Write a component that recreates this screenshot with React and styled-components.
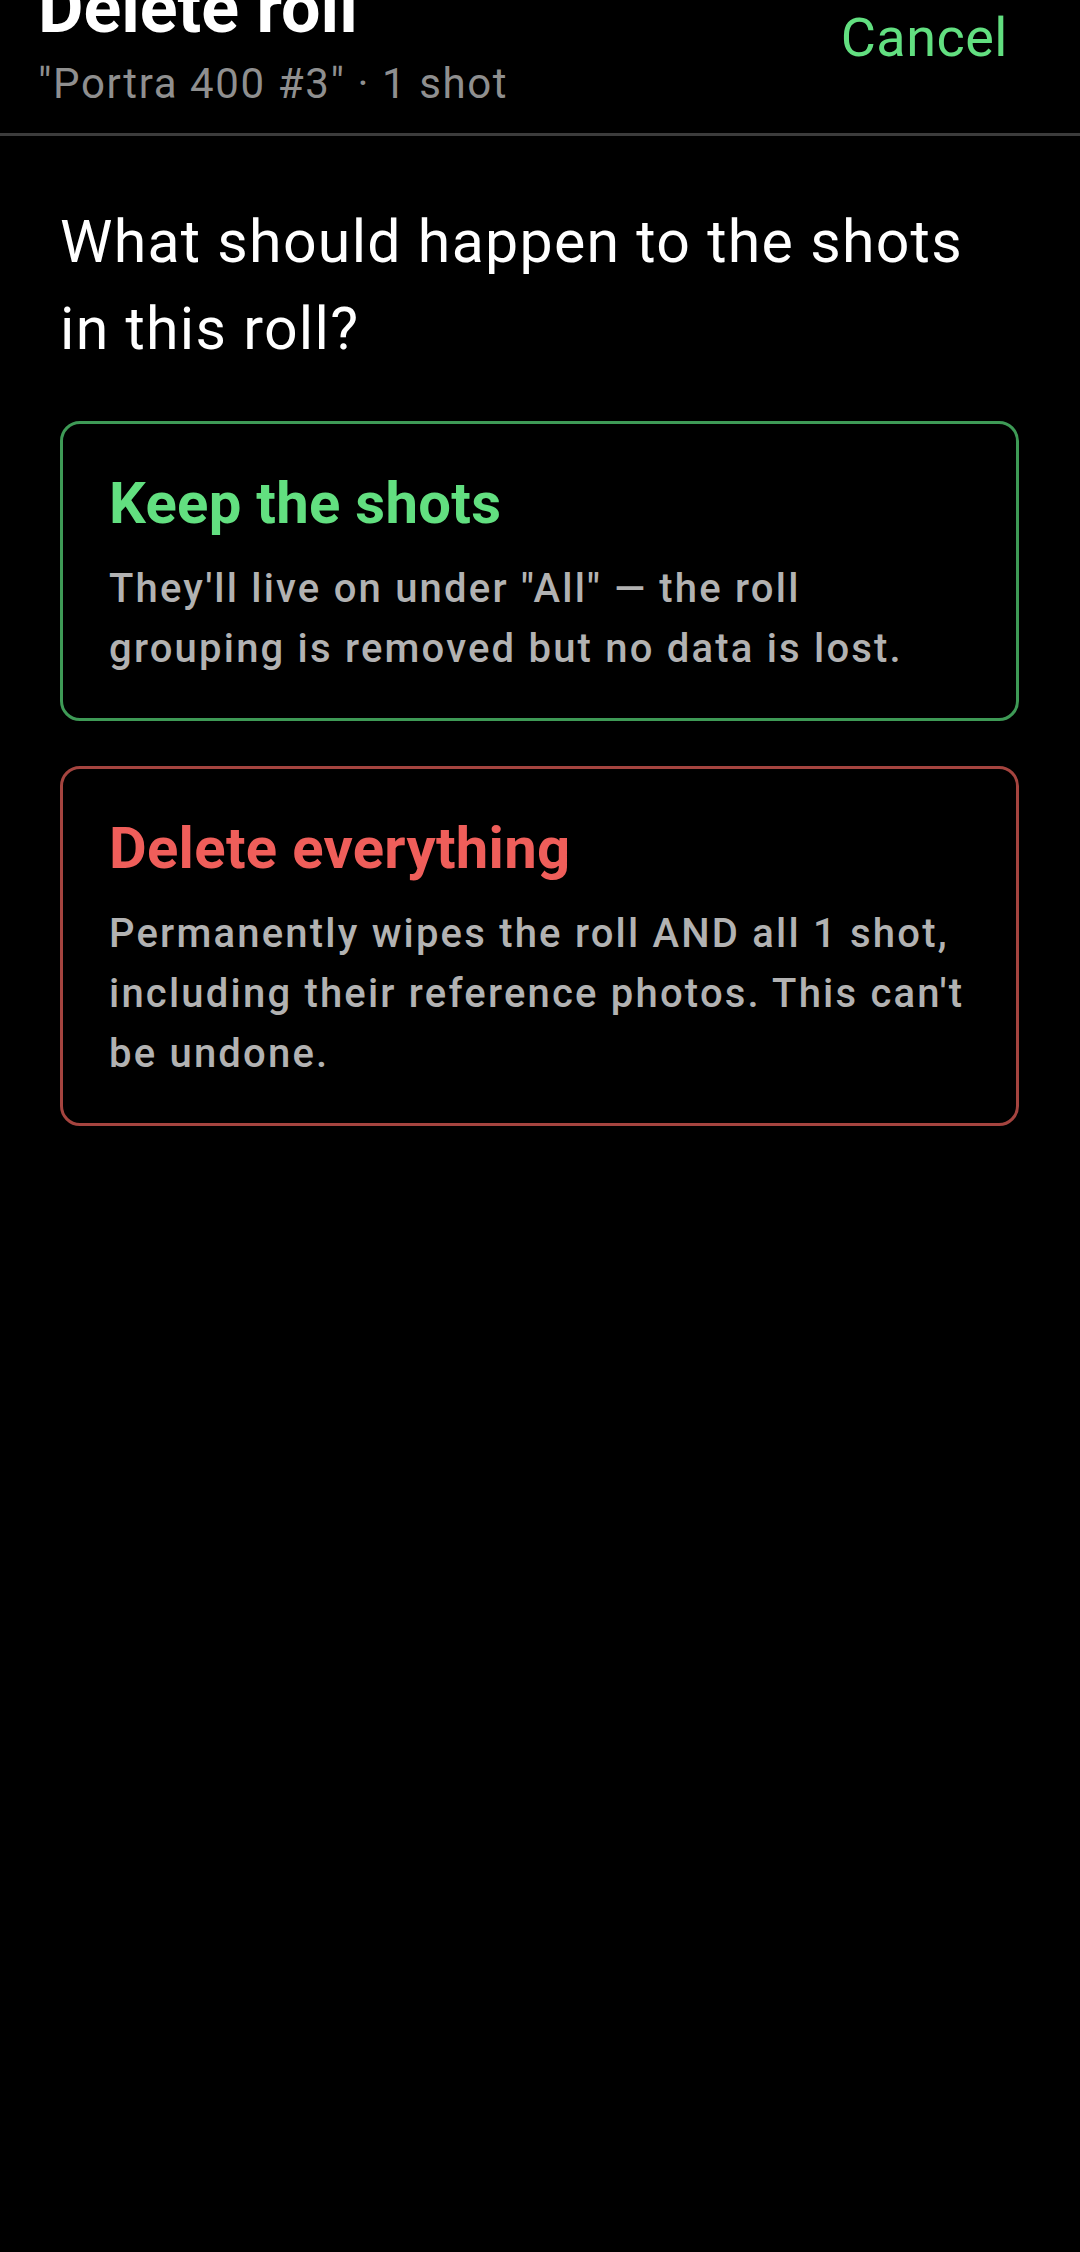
import React from "react";
import styled, { createGlobalStyle } from "styled-components";

const GlobalStyle = createGlobalStyle`
  html, body {
    margin: 0;
    padding: 0;
    background: #000;
  }
  body {
    font-family: Roboto, "Noto Sans", sans-serif;
    color: #fff;
    overflow: hidden;
  }
`;

const Page = styled.div`
  width: 1080px;
  height: 2252px;
  background: #000;
  overflow: hidden;
`;

const Header = styled.header`
  margin-top: -34px;
  height: 170px;
  box-sizing: border-box;
  padding: 0 38px;
  display: flex;
  justify-content: space-between;
  align-items: flex-start;
  border-bottom: 3px solid #3c3c3c;
`;

const TitleBlock = styled.div`
  display: flex;
  flex-direction: column;
  gap: 4px;
`;

const Title = styled.h1`
  margin: 0;
  font-size: 70px;
  line-height: 84px;
  font-weight: 700;
  color: #fff;
`;

const Subtitle = styled.div`
  font-size: 42px;
  line-height: 59px;
  color: #8f8f8f;
  letter-spacing: 1.6px;
`;

const CancelButton = styled.button`
  background: none;
  border: none;
  padding: 39px 34px 0 38px;
  font-family: inherit;
  font-size: 54px;
  line-height: 65px;
  color: #62df80;
  letter-spacing: 0.5px;
`;

const Body = styled.main`
  padding: 62px 61px 0 60px;
  display: flex;
  flex-direction: column;
`;

const Question = styled.p`
  margin: 0 0 49px;
  max-width: 930px;
  font-size: 59px;
  line-height: 87px;
  color: #fff;
  letter-spacing: 1.3px;
`;

const Options = styled.div`
  display: flex;
  flex-direction: column;
  gap: 45px;
`;

const OptionCard = styled.button`
  display: flex;
  flex-direction: column;
  text-align: left;
  background: #000;
  border: 3px solid ${(p) => (p.$danger ? "#a5443f" : "#3e9a56")};
  border-radius: 20px;
  padding: 44px 46px 39px;
  font-family: inherit;
  cursor: pointer;
`;

const OptionTitle = styled.span`
  font-size: 58px;
  line-height: 70px;
  font-weight: 700;
  color: ${(p) => (p.$danger ? "#ef5e5a" : "#62df80")};
  letter-spacing: 0.3px;
`;

const OptionText = styled.span`
  margin-top: 21px;
  font-size: 40px;
  line-height: 60px;
  font-weight: 500;
  color: #b2b2b2;
  letter-spacing: 2.2px;
`;

export default function App() {
  return (
    <Page>
      <GlobalStyle />
      <Header>
        <TitleBlock>
          <Title>Delete roll</Title>
          <Subtitle>"Portra 400 #3" · 1 shot</Subtitle>
        </TitleBlock>
        <CancelButton type="button">Cancel</CancelButton>
      </Header>
      <Body>
        <Question>What should happen to the shots in this roll?</Question>
        <Options>
          <OptionCard type="button">
            <OptionTitle>Keep the shots</OptionTitle>
            <OptionText>
              They'll live on under "All" — the roll grouping is removed but no
              data is lost.
            </OptionText>
          </OptionCard>
          <OptionCard type="button" $danger>
            <OptionTitle $danger>Delete everything</OptionTitle>
            <OptionText>
              Permanently wipes the roll AND all 1 shot, including their
              reference photos. This can't be undone.
            </OptionText>
          </OptionCard>
        </Options>
      </Body>
    </Page>
  );
}
